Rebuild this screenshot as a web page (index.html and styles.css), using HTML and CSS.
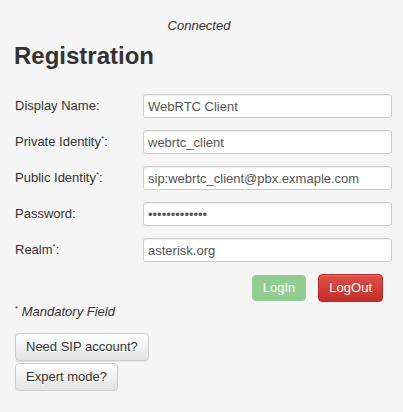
FILE: index.html
```html
<!DOCTYPE html>
<html>
<head>
<meta charset="utf-8">
<link rel="stylesheet" href="styles.css">
</head>
<body>
<div class="page">
  <div class="status">Connected</div>
  <h2 class="title">Registration</h2>
  <div class="form">
    <label class="label">Display Name:</label>
    <input class="field" type="text" value="WebRTC Client">
    <label class="label">Private Identity<sup>*</sup>:</label>
    <input class="field" type="text" value="webrtc_client">
    <label class="label">Public Identity<sup>*</sup>:</label>
    <input class="field" type="text" value="sip:webrtc_client@pbx.exmaple.com">
    <label class="label">Password:</label>
    <input class="field" type="password" value="1234567890123">
    <label class="label">Realm<sup>*</sup>:</label>
    <input class="field" type="text" value="asterisk.org">
  </div>
  <div class="actions">
    <button class="btn btn-success" disabled>LogIn</button>
    <button class="btn btn-danger">LogOut</button>
  </div>
  <p class="note"><sup>*</sup> <i>Mandatory Field</i></p>
  <div class="extras">
    <button class="btn btn-default">Need SIP account?</button>
    <button class="btn btn-default">Expert mode?</button>
  </div>
</div>
</body>
</html>
```
FILE: styles.css
```css
html, body {
  margin: 0;
  padding: 0;
  background: #f5f5f5;
}
body {
  font-family: "Liberation Sans", Arial, sans-serif;
  font-size: 13px;
  color: #333;
}
.page {
  width: 377px;
  padding: 17px 0 0 15px;
}
.status {
  text-align: center;
  font-style: italic;
  line-height: 18px;
  margin-left: -15px;
  padding-left: 6px;
}
.title {
  margin: 7px 0 0 -1px;
  font-size: 24px;
  line-height: 28px;
  font-weight: bold;
  color: #333;
}
.form {
  margin-top: 24px;
  display: grid;
  grid-template-columns: 128px 249px;
  row-gap: 12px;
  align-items: center;
}
.label {
  font-size: 13px;
  color: #333;
  line-height: 18px;
}
.label sup {
  font-size: 8px;
  line-height: 0;
  vertical-align: 5px;
}
.field {
  box-sizing: border-box;
  height: 24px;
  width: 249px;
  margin: 0;
  padding: 0 4px;
  border: 1px solid #ccc;
  border-radius: 3px;
  background: #fff;
  font-family: "Liberation Sans", Arial, sans-serif;
  font-size: 13px;
  color: #555;
  box-shadow: inset 0 1px 1px rgba(0,0,0,0.075);
  outline: none;
}
.actions {
  margin-top: 12px;
  display: flex;
  justify-content: flex-end;
  gap: 12px;
  padding-right: 9px;
}
.btn {
  box-sizing: border-box;
  height: 28px;
  padding: 0 10px;
  margin: 0;
  border: 1px solid transparent;
  border-radius: 4px;
  font-family: "Liberation Sans", Arial, sans-serif;
  font-size: 13px;
  line-height: 26px;
  cursor: pointer;
}
.btn-success {
  background: #5cb85c;
  border-color: #5cb85c;
  color: #fff;
  opacity: 0.65;
  height: 26px;
  margin-top: 1px;
  line-height: 24px;
}
.btn-danger {
  background: linear-gradient(#e0514b, #c12e2a);
  border-color: #b92c28;
  color: #fff;
  text-shadow: 0 -1px 0 rgba(0,0,0,0.2);
  box-shadow: inset 0 1px 0 rgba(255,255,255,0.15), 0 1px 1px rgba(0,0,0,0.075);
}
.note {
  margin: 1px 0 0 0;
  line-height: 18px;
  color: #333;
}
.note sup {
  font-size: 8px;
  line-height: 0;
  vertical-align: 5px;
}
.extras {
  margin-top: 12px;
  display: flex;
  flex-direction: column;
  align-items: flex-start;
  gap: 2px;
}
.btn-default {
  background: linear-gradient(#ffffff, #e2e2e2);
  border-color: #ccc;
  color: #333;
  text-shadow: 0 1px 0 #fff;
  box-shadow: inset 0 1px 0 rgba(255,255,255,0.15), 0 1px 1px rgba(0,0,0,0.075);
}
```
